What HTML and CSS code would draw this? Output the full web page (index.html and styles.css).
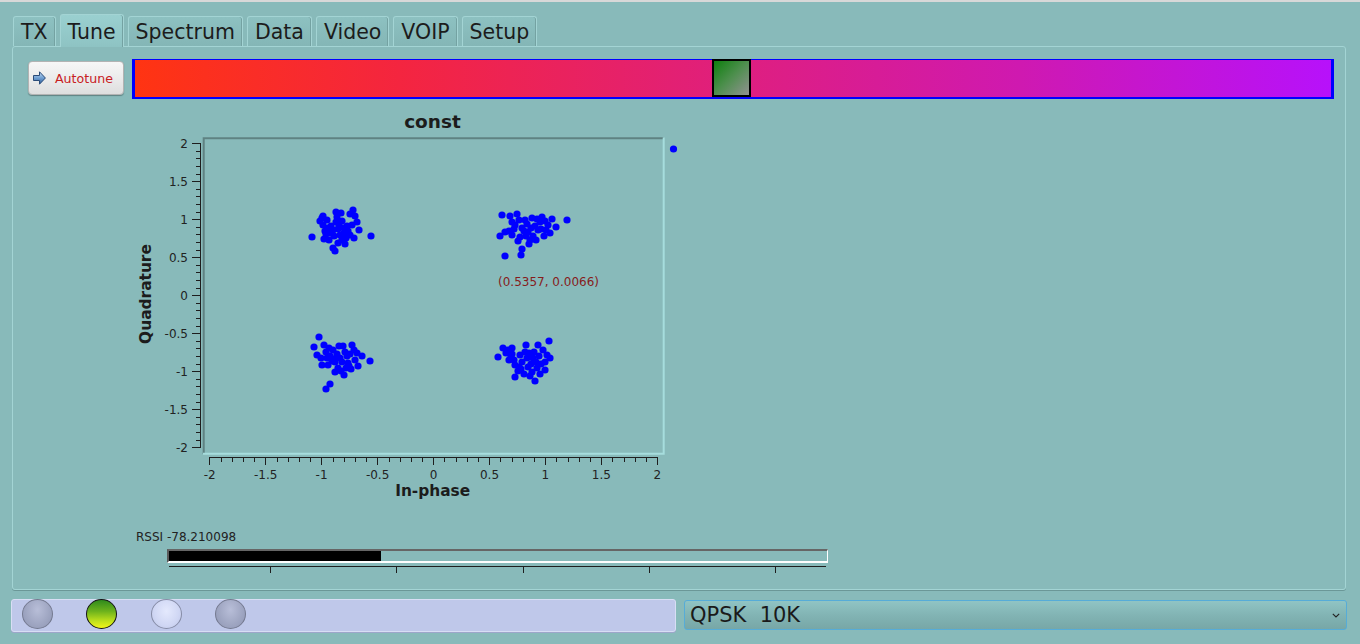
FILE: index.html
```html
<!DOCTYPE html>
<html>
<head>
<meta charset="utf-8">
<title>Tune</title>
<link rel="stylesheet" href="styles.css">
</head>
<body>
<div class="topline"></div>
<div class="tabs">
  <div class="tab">TX</div>
  <div class="tab sel">Tune</div>
  <div class="tab">Spectrum</div>
  <div class="tab">Data</div>
  <div class="tab">Video</div>
  <div class="tab">VOIP</div>
  <div class="tab">Setup</div>
</div>
<div class="pane">
  <div class="tune-row">
    <button class="autotune">
      <svg class="arrow" width="13" height="14" viewBox="0 0 13 14">
        <defs>
          <linearGradient id="ag" x1="0" y1="0" x2="0" y2="1">
            <stop offset="0" stop-color="#c4dcf4"/>
            <stop offset="0.5" stop-color="#6f9fd2"/>
            <stop offset="1" stop-color="#2f5d9a"/>
          </linearGradient>
        </defs>
        <path d="M0.5 4.5 H6.5 V0.8 L12.4 7 L6.5 13.2 V9.5 H0.5 Z" fill="url(#ag)" stroke="#2a4b78" stroke-width="1" stroke-linejoin="round"/>
      </svg>
      <span>Autotune</span>
    </button>
    <div class="freqbar"><div class="thumb"></div></div>
  </div>

  <svg class="plot" width="560" height="400" viewBox="130 105 560 400">
    <text class="title" x="432.5" y="127.5" text-anchor="middle">const</text>
    <!-- canvas frame -->
    <path d="M203.7 454 V138.3 H663.5" fill="none" stroke="#5f8282" stroke-width="2"/>
    <path d="M203 453.7 H663.7 V137.5" fill="none" stroke="#a6dddd" stroke-width="2"/>
    <!-- y axis -->
    <g stroke="#1e1e1e" stroke-width="1" shape-rendering="crispEdges">
      <path d="M200.5 143.3 V447.8"/>
      <path d="M192 143.5H201M192 181.5H201M192 219.5H201M192 257.5H201M192 295.5H201M192 333.5H201M192 371.5H201M192 409.5H201M192 447.5H201"/>
      <path d="M196 151H201M196 158.5H201M196 166H201M196 174H201M196 189H201M196 196.5H201M196 204H201M196 212H201M196 227H201M196 234.5H201M196 242H201M196 250H201M196 265H201M196 272.5H201M196 280H201M196 288H201M196 303H201M196 310.5H201M196 318H201M196 326H201M196 341H201M196 348.5H201M196 356H201M196 364H201M196 379H201M196 386.5H201M196 394H201M196 402H201M196 417H201M196 424.5H201M196 432H201M196 440H201"/>
    </g>
    <g class="tick" text-anchor="end">
      <text x="188" y="147.8">2</text>
      <text x="188" y="185.8">1.5</text>
      <text x="188" y="223.8">1</text>
      <text x="188" y="261.8">0.5</text>
      <text x="188" y="299.8">0</text>
      <text x="188" y="337.8">-0.5</text>
      <text x="188" y="375.8">-1</text>
      <text x="188" y="413.8">-1.5</text>
      <text x="188" y="451.8">-2</text>
    </g>
    <text class="axlabel" transform="rotate(-90 151 294)" x="151" y="294" text-anchor="middle">Quadrature</text>
    <!-- x axis -->
    <g stroke="#1e1e1e" stroke-width="1" shape-rendering="crispEdges">
      <path d="M209.5 457.5 H657.8"/>
      <path d="M209.5 457V465M265.5 457V465M321.5 457V465M377.5 457V465M433.5 457V465M489.5 457V465M545.5 457V465M601.5 457V465M657.5 457V465"/>
      <path d="M221 457V461.5M232 457V461.5M243 457V461.5M254.5 457V461.5M277 457V461.5M288 457V461.5M299 457V461.5M310.5 457V461.5M333 457V461.5M344 457V461.5M355 457V461.5M366.5 457V461.5M389 457V461.5M400 457V461.5M411 457V461.5M422.5 457V461.5M444.5 457V461.5M456 457V461.5M467 457V461.5M478.5 457V461.5M500.5 457V461.5M512 457V461.5M523 457V461.5M534.5 457V461.5M556.5 457V461.5M568 457V461.5M579 457V461.5M590.5 457V461.5M612.5 457V461.5M624 457V461.5M635 457V461.5M646.5 457V461.5"/>
    </g>
    <g class="tick" text-anchor="middle">
      <text x="209.7" y="479.4">-2</text>
      <text x="265.7" y="479.4">-1.5</text>
      <text x="321.6" y="479.4">-1</text>
      <text x="377.6" y="479.4">-0.5</text>
      <text x="433.5" y="479.4">0</text>
      <text x="489.5" y="479.4">0.5</text>
      <text x="545.4" y="479.4">1</text>
      <text x="601.4" y="479.4">1.5</text>
      <text x="657.3" y="479.4">2</text>
    </g>
    <text class="axlabel" x="432.7" y="496">In-phase</text>
    <!-- samples -->
    <g class="dots" fill="#0000ff">
      <circle cx="312" cy="237" r="3.6"/><circle cx="322" cy="218" r="3.6"/><circle cx="323" cy="225" r="3.6"/><circle cx="325" cy="231" r="3.6"/><circle cx="327" cy="220" r="3.6"/><circle cx="329" cy="240" r="3.6"/><circle cx="336" cy="212" r="3.6"/><circle cx="323" cy="216" r="3.6"/><circle cx="336" cy="222" r="3.6"/><circle cx="338" cy="229" r="3.6"/><circle cx="340" cy="235" r="3.6"/><circle cx="333" cy="248" r="3.6"/><circle cx="335" cy="251" r="3.6"/><circle cx="342" cy="240" r="3.6"/><circle cx="344" cy="233" r="3.6"/><circle cx="347" cy="226" r="3.6"/><circle cx="350" cy="214" r="3.6"/><circle cx="353" cy="210" r="3.6"/><circle cx="355" cy="216" r="3.6"/><circle cx="357" cy="222" r="3.6"/><circle cx="359" cy="230" r="3.6"/><circle cx="371" cy="236" r="3.6"/><circle cx="330" cy="233" r="3.6"/><circle cx="328" cy="228" r="3.6"/><circle cx="345" cy="244" r="3.6"/><circle cx="338" cy="243" r="3.6"/><circle cx="324" cy="239" r="3.6"/><circle cx="320" cy="221" r="3.6"/><circle cx="350" cy="235" r="3.6"/><circle cx="346" cy="238" r="3.6"/><circle cx="337" cy="217" r="3.6"/><circle cx="341" cy="213" r="3.6"/><circle cx="331" cy="226" r="3.6"/><circle cx="339" cy="225" r="3.6"/><circle cx="334" cy="236" r="3.6"/><circle cx="348" cy="231" r="3.6"/><circle cx="326" cy="234" r="3.6"/><circle cx="354" cy="238" r="3.6"/><circle cx="342" cy="221" r="3.6"/><circle cx="344" cy="228" r="3.6"/><circle cx="333" cy="230" r="3.6"/><circle cx="352" cy="225" r="3.6"/>

      <circle cx="502" cy="215" r="3.6"/><circle cx="505" cy="232" r="3.6"/><circle cx="510" cy="216" r="3.6"/><circle cx="515" cy="225" r="3.6"/><circle cx="517" cy="214" r="3.6"/><circle cx="520" cy="237" r="3.6"/><circle cx="522" cy="228" r="3.6"/><circle cx="525" cy="220" r="3.6"/><circle cx="528" cy="232" r="3.6"/><circle cx="530" cy="240" r="3.6"/><circle cx="532" cy="218" r="3.6"/><circle cx="535" cy="226" r="3.6"/><circle cx="538" cy="230" r="3.6"/><circle cx="540" cy="222" r="3.6"/><circle cx="542" cy="217" r="3.6"/><circle cx="544" cy="236" r="3.6"/><circle cx="548" cy="225" r="3.6"/><circle cx="550" cy="233" r="3.6"/><circle cx="552" cy="219" r="3.6"/><circle cx="556" cy="227" r="3.6"/><circle cx="567" cy="220" r="3.6"/><circle cx="505" cy="256" r="3.6"/><circle cx="521" cy="255" r="3.6"/><circle cx="522" cy="249" r="3.6"/><circle cx="512" cy="235" r="3.6"/><circle cx="518" cy="241" r="3.6"/><circle cx="526" cy="236" r="3.6"/><circle cx="533" cy="236" r="3.6"/><circle cx="537" cy="219" r="3.6"/><circle cx="541" cy="229" r="3.6"/><circle cx="546" cy="230" r="3.6"/><circle cx="509" cy="231" r="3.6"/><circle cx="514" cy="229" r="3.6"/><circle cx="500" cy="236" r="3.6"/><circle cx="527" cy="224" r="3.6"/><circle cx="531" cy="228" r="3.6"/><circle cx="519" cy="220" r="3.6"/><circle cx="524" cy="231" r="3.6"/><circle cx="536" cy="240" r="3.6"/><circle cx="512" cy="222" r="3.6"/><circle cx="545" cy="221" r="3.6"/><circle cx="529" cy="244" r="3.6"/>

      <circle cx="319" cy="337" r="3.6"/><circle cx="314" cy="347" r="3.6"/><circle cx="317" cy="355" r="3.6"/><circle cx="321" cy="358" r="3.6"/><circle cx="324" cy="345" r="3.6"/><circle cx="326" cy="352" r="3.6"/><circle cx="328" cy="365" r="3.6"/><circle cx="330" cy="356" r="3.6"/><circle cx="333" cy="350" r="3.6"/><circle cx="335" cy="362" r="3.6"/><circle cx="338" cy="368" r="3.6"/><circle cx="340" cy="358" r="3.6"/><circle cx="343" cy="346" r="3.6"/><circle cx="345" cy="352" r="3.6"/><circle cx="348" cy="363" r="3.6"/><circle cx="350" cy="354" r="3.6"/><circle cx="352" cy="345" r="3.6"/><circle cx="355" cy="360" r="3.6"/><circle cx="358" cy="366" r="3.6"/><circle cx="362" cy="356" r="3.6"/><circle cx="370" cy="361" r="3.6"/><circle cx="326" cy="389" r="3.6"/><circle cx="330" cy="384" r="3.6"/><circle cx="335" cy="372" r="3.6"/><circle cx="341" cy="371" r="3.6"/><circle cx="346" cy="368" r="3.6"/><circle cx="351" cy="369" r="3.6"/><circle cx="337" cy="354" r="3.6"/><circle cx="332" cy="361" r="3.6"/><circle cx="342" cy="362" r="3.6"/><circle cx="322" cy="365" r="3.6"/><circle cx="347" cy="356" r="3.6"/><circle cx="354" cy="350" r="3.6"/><circle cx="339" cy="346" r="3.6"/><circle cx="329" cy="348" r="3.6"/><circle cx="344" cy="375" r="3.6"/><circle cx="349" cy="366" r="3.6"/><circle cx="336" cy="358" r="3.6"/><circle cx="327" cy="358" r="3.6"/><circle cx="357" cy="353" r="3.6"/>

      <circle cx="498" cy="357" r="3.6"/><circle cx="503" cy="348" r="3.6"/><circle cx="506" cy="353" r="3.6"/><circle cx="509" cy="360" r="3.6"/><circle cx="512" cy="348" r="3.6"/><circle cx="515" cy="365" r="3.6"/><circle cx="518" cy="371" r="3.6"/><circle cx="520" cy="355" r="3.6"/><circle cx="522" cy="362" r="3.6"/><circle cx="525" cy="352" r="3.6"/><circle cx="528" cy="367" r="3.6"/><circle cx="530" cy="376" r="3.6"/><circle cx="533" cy="358" r="3.6"/><circle cx="535" cy="381" r="3.6"/><circle cx="537" cy="368" r="3.6"/><circle cx="539" cy="356" r="3.6"/><circle cx="541" cy="364" r="3.6"/><circle cx="545" cy="370" r="3.6"/><circle cx="547" cy="355" r="3.6"/><circle cx="549" cy="341" r="3.6"/><circle cx="550" cy="358" r="3.6"/><circle cx="515" cy="377" r="3.6"/><circle cx="524" cy="374" r="3.6"/><circle cx="532" cy="372" r="3.6"/><circle cx="527" cy="358" r="3.6"/><circle cx="536" cy="362" r="3.6"/><circle cx="511" cy="356" r="3.6"/><circle cx="543" cy="350" r="3.6"/><circle cx="519" cy="367" r="3.6"/><circle cx="531" cy="364" r="3.6"/><circle cx="508" cy="350" r="3.6"/><circle cx="526" cy="345" r="3.6"/><circle cx="540" cy="374" r="3.6"/><circle cx="514" cy="360" r="3.6"/><circle cx="534" cy="352" r="3.6"/><circle cx="521" cy="369" r="3.6"/><circle cx="529" cy="353" r="3.6"/><circle cx="538" cy="345" r="3.6"/><circle cx="512" cy="354" r="3.6"/><circle cx="545" cy="362" r="3.6"/>

      <circle cx="673.5" cy="149" r="3.6"/>
    </g>
    <text class="marker" x="498" y="285.5">(0.5357, 0.0066)</text>
  </svg>

  <div class="rssi">
    <div class="rssi-label">RSSI -78.210098</div>
    <div class="rssi-bar"><div class="rssi-fill" style="width:212px"></div></div>
    <svg class="rssi-scale" width="662" height="12" viewBox="0 0 662 12">
      <g stroke="#1e1e1e" stroke-width="1" shape-rendering="crispEdges">
        <path d="M2 3.5 H659"/>
        <path d="M103.5 3V10M229.5 3V10M356.5 3V10M482.5 3V10M608.5 3V10"/>
      </g>
    </svg>
  </div>
</div>

<div class="bottom">
  <div class="leds">
    <span class="led off"></span>
    <span class="led green"></span>
    <span class="led light"></span>
    <span class="led off"></span>
  </div>
  <div class="combo">
    <span class="combo-text">QPSK  10K</span>
    <svg class="chev" width="8" height="5" viewBox="0 0 8 5"><path d="M0.8 0.8 L4 4 L7.2 0.8" fill="none" stroke="#222" stroke-width="1.1"/></svg>
  </div>
</div>
</body>
</html>
```
FILE: styles.css
```css
html, body {
  margin: 0;
  padding: 0;
}
body {
  width: 1360px;
  height: 644px;
  overflow: hidden;
  background: #88baba;
  font-family: "DejaVu Sans", "Liberation Sans", sans-serif;
  color: #1c1c1c;
}
.topline {
  height: 2px;
  background: #d8d8d8;
}

/* tabs */
.tabs {
  display: flex;
  align-items: flex-end;
  gap: 4px;
  margin: 12px 0 0 13px;
  height: 32px;
  position: relative;
  z-index: 1;
}
.tab {
  box-sizing: border-box;
  height: 30px;
  padding: 1px 7px 0;
  border: 1px solid #a3d4d4;
  border-bottom: none;
  border-radius: 3px 3px 0 0;
  background: linear-gradient(#8dc1c1, #84b6b6);
  box-shadow: inset -1px 0 0 #74a2a2;
  font-size: 20.5px;
  line-height: 28px;
  color: #1c1c1c;
}
.tab.sel {
  height: 33px;
  margin-bottom: -1px;
  padding-top: 2px;
  line-height: 30px;
  background: linear-gradient(#9ad0d0, #8ec3c3);
}

/* pane */
.pane {
  box-sizing: border-box;
  margin-left: 12px;
  width: 1334px;
  height: 544px;
  border: 1px solid #a3d4d4;
  border-radius: 3px;
  box-shadow: 0 1px 0 #6b9797;
  padding: 12px 11px 0 15px;
}
.tune-row {
  display: flex;
  align-items: flex-start;
  gap: 8px;
}
.autotune {
  box-sizing: border-box;
  width: 96px;
  height: 34px;
  margin-top: 2px;
  padding: 0 0 0 4px;
  display: flex;
  align-items: center;
  gap: 9px;
  border: 1px solid #b3b3b3;
  border-radius: 4px;
  background: linear-gradient(#f7f7f7, #e9e9e9 60%, #dedede);
  box-shadow: 0 1px 1px rgba(0, 0, 0, 0.3);
  font-family: "DejaVu Sans", sans-serif;
  font-size: 12.6px;
  color: #c8201e;
}
.arrow {
  display: block;
  flex: none;
}
.freqbar {
  position: relative;
  flex: 1;
  box-sizing: border-box;
  height: 40px;
  border-style: solid;
  border-color: #0000ff;
  border-width: 1px 3px 2px 3px;
  background: linear-gradient(90deg, #ff3412 0%, #f4253f 22%, #df1f7e 50%, #cf19b0 74%, #b711fb 100%);
}
.thumb {
  position: absolute;
  left: 577px;
  top: -1px;
  box-sizing: border-box;
  width: 39px;
  height: 38px;
  border: 2px solid #000;
  background: linear-gradient(135deg, #0e800e, #4f8f4f 50%, #929292);
}

/* plot */
.plot {
  display: block;
  margin: 6px 0 0 102px;
  overflow: visible;
}
.plot .title {
  font-family: "DejaVu Sans", sans-serif;
  font-weight: bold;
  font-size: 18.5px;
  fill: #1c1c1c;
}
.plot .tick {
  font-family: "DejaVu Sans", sans-serif;
  font-size: 12px;
  fill: #222;
}
.plot .axlabel {
  font-family: "DejaVu Sans", sans-serif;
  font-weight: bold;
  font-size: 15.4px;
  fill: #1c1c1c;
  text-anchor: middle;
}
.plot .marker {
  font-family: "DejaVu Sans", sans-serif;
  font-size: 12px;
  fill: #861c1c;
}

/* rssi */
.rssi {
  margin: 25px 0 0 108px;
}
.rssi-label {
  font-size: 12px;
  line-height: 14px;
  color: #222;
}
.rssi-bar {
  box-sizing: border-box;
  margin: 5px 0 0 31px;
  width: 661px;
  height: 14px;
  border-style: solid;
  border-width: 2px 1px 2px 2px;
  border-color: #666 #fff #fff #5a5a5a;
}
.rssi-fill {
  height: 100%;
  background: #000;
}
.rssi-scale {
  display: block;
  margin-left: 31px;
}

/* bottom row */
.bottom {
  display: flex;
  align-items: flex-start;
  margin: 9px 0 0 11px;
}
.leds {
  box-sizing: border-box;
  width: 665px;
  height: 33px;
  padding-left: 9.5px;
  display: flex;
  align-items: flex-start;
  gap: 33.5px;
  background: #bfc8ea;
  border: 1px solid #d8def4;
  border-radius: 3px;
  box-shadow: 0 1px 0 #9da6ca;
}
.led {
  box-sizing: border-box;
  width: 31px;
  height: 30px;
  margin-top: -1px;
  border-radius: 50%;
}
.led.off {
  border: 1px solid #74798f;
  background: radial-gradient(ellipse at 50% 35%, #b8bed8 0%, #9ea5c1 60%, #8e95b3 100%);
}
.led.green {
  border: 1.5px solid #121212;
  background: linear-gradient(#2f8a1d 0%, #6cb21c 40%, #bfe01c 75%, #f1f51a 100%);
}
.led.light {
  border: 1px solid #868ca6;
  background: radial-gradient(ellipse at 50% 40%, #e4e9fd 0%, #d0d7f4 60%, #bcc4e6 100%);
}
.combo {
  box-sizing: border-box;
  margin: 1px 0 0 8px;
  width: 663px;
  height: 30px;
  padding: 0 6px 0 5px;
  display: flex;
  align-items: center;
  justify-content: space-between;
  border: 1px solid #56acd8;
  border-radius: 3px;
  background: linear-gradient(#90c4c4, #82b4b4 50%, #77a7a7);
}
.combo-text {
  white-space: pre;
  font-size: 21px;
  line-height: 28px;
  color: #1a1a1a;
}
.chev {
  display: block;
}
```
